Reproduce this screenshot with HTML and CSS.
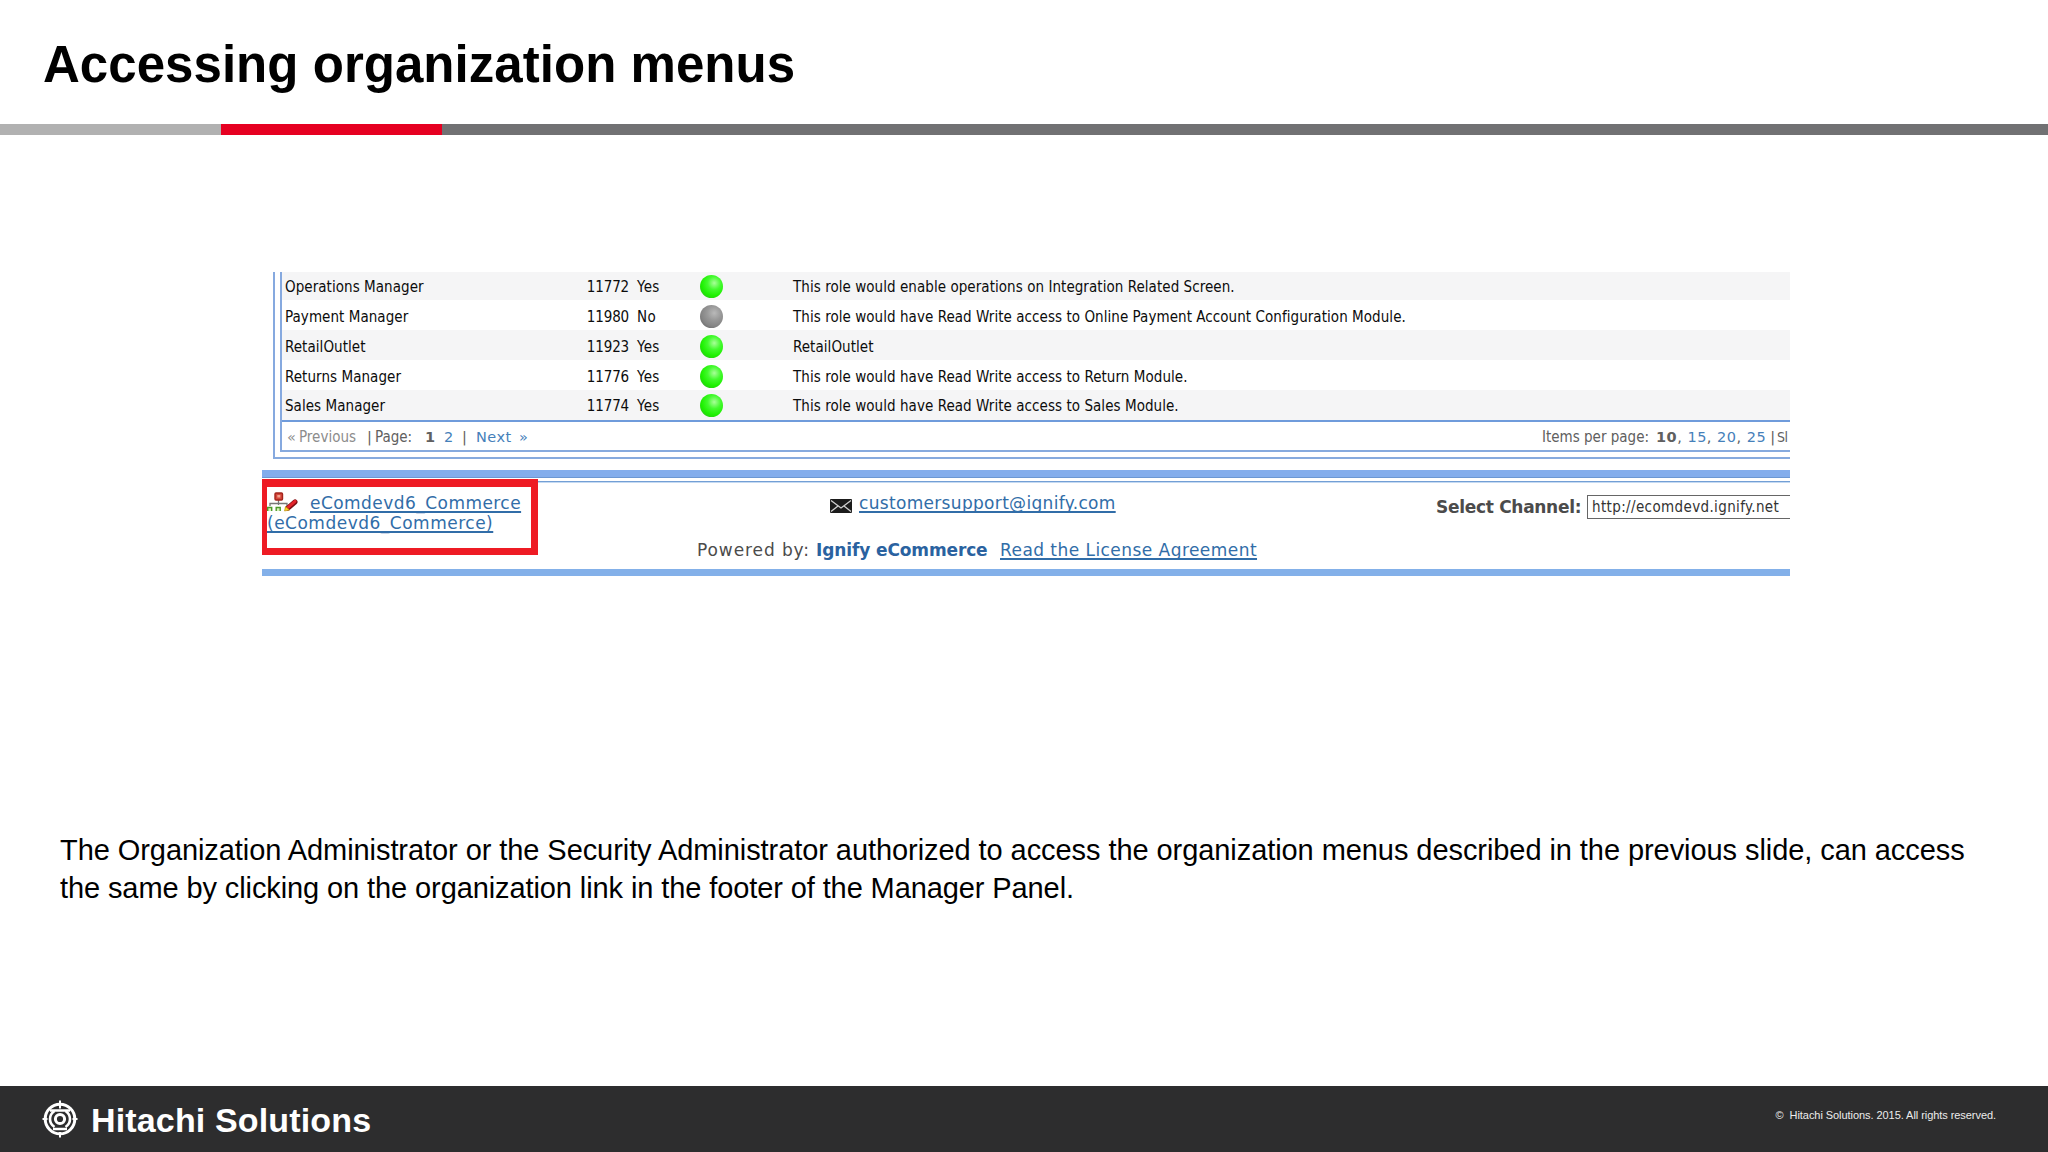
FILE: index.html
```html
<!DOCTYPE html>
<html lang="en">
<head>
<meta charset="utf-8">
<title>Accessing organization menus</title>
<link rel="stylesheet" href="styles.css">
</head>
<body>
<main class="slide">
  <header class="slide-header">
    <h1>Accessing organization menus</h1>
  </header>
  <div class="rule"><span class="rule-light"></span><span class="rule-red"></span><span class="rule-dark"></span></div>

  <section class="panel">
    <div class="grid-outer">
      <div class="grid-inner">
        <div class="row"><span>Operations Manager</span><span class="num">11772</span><span>Yes</span><i class="dot on"></i><span>This role would enable operations on Integration Related Screen.</span></div>
        <div class="row"><span>Payment Manager</span><span class="num">11980</span><span>No</span><i class="dot off"></i><span>This role would have Read Write access to Online Payment Account Configuration Module.</span></div>
        <div class="row"><span>RetailOutlet</span><span class="num">11923</span><span>Yes</span><i class="dot on"></i><span>RetailOutlet</span></div>
        <div class="row"><span>Returns Manager</span><span class="num">11776</span><span>Yes</span><i class="dot on"></i><span>This role would have Read Write access to Return Module.</span></div>
        <div class="row"><span>Sales Manager</span><span class="num">11774</span><span>Yes</span><i class="dot on"></i><span>This role would have Read Write access to Sales Module.</span></div>
        <div class="pager">
          <div class="pages">
            <span class="muted">«</span><span class="muted narrow">Previous</span><span>|</span><span class="narrow">Page:</span><b>1</b><a>2</a><span>|</span><a class="next">Next</a><a>»</a>
          </div>
          <div class="sizes"><span class="narrow">Items per page:</span><span class="list"><b>10</b>, <a>15</a>, <a>20</a>, <a>25</a></span><span>|</span><span class="narrow">Sl</span></div>
        </div>
      </div>
    </div>
    <div class="bar-top"></div>
    <div class="panel-footer">
      <div class="org">
        <svg class="org-icon" width="32" height="20" viewBox="0 0 32 20">
          <path d="M11.500 8v5M3 14v-2.500h17V14" fill="none" stroke="#777" stroke-width="1.300"/>
          <rect x="8" y="1" width="7.500" height="7" rx="1" fill="#d5473b" stroke="#a3241c" stroke-width="1.400"/>
          <rect x="10.300" y="3" width="3" height="2.500" fill="#f3a28f"/>
          <g fill="#d9f0b8" stroke="#4c9a2a" stroke-width="1.400"><path d="M.7 19v-3.500h4V19M9.200 19v-3.500h4V19"/></g>
          <path d="m21 16 7-6" stroke="#7d0d12" stroke-width="5" stroke-linecap="round"/>
          <path d="m21 15.300 7-6" stroke="#e3242b" stroke-width="3" stroke-linecap="round"/>
          <path d="m17.500 19 1-4.500 4 3.500z" fill="#f6d22b" stroke="#b98500" stroke-width=".6"/>
        </svg>
        <a class="link org-name">eComdevd6_Commerce</a><br><a class="link org-code">(eComdevd6_Commerce)</a>
      </div>
      <div class="contact">
        <div class="mail">
          <svg width="22" height="14" viewBox="0 0 22 14"><rect width="22" height="14" rx="1" fill="#1b1b1b"/><path d="m1 1.500 10 7.500 10-7.500M1 12.500 8 7M21 12.500 14 7" fill="none" stroke="#d0d0d0" stroke-width="1.300"/></svg>
          <a class="link">customersupport@ignify.com</a>
        </div>
        <div class="powered"><span class="by">Powered by:</span><b>Ignify eCommerce</b><a class="link">Read the License Agreement</a></div>
      </div>
      <div class="channel"><b>Select Channel:</b><span class="select">http://ecomdevd.ignify.net</span></div>
    </div>
    <div class="bar-bottom"></div>
    <div class="highlight"></div>
  </section>

  <p class="copy"><span>The Organization Administrator or the Security Administrator authorized to access the organization menus described in the previous slide, can access</span><br><span class="last">the same by clicking on the organization link in the footer of the Manager Panel.</span></p>

  <footer class="slide-footer">
    <div class="brand">
      <svg width="36" height="38" viewBox="0 0 36 38" fill="none" stroke="#fff">
        <circle cx="18" cy="19" r="14.800" stroke-width="3"/>
        <circle cx="18" cy="19" r="4.600" stroke-width="3"/>
        <path d="M18 .5v8M18 32v5.500M.5 19h5M30.500 19h5" stroke-width="2"/>
        <path d="M8 10.500h20M11 29h14" stroke-width="2.600"/>
        <path d="M12.500 11c-6 4-6 12 0 16M23.500 11c6 4 6 12 0 16" stroke-width="2.600"/>
      </svg>
      <span>Hitachi Solutions</span>
    </div>
    <small>©&nbsp; Hitachi Solutions. 2015. All rights reserved.</small>
  </footer>
</main>
</body>
</html>
```
FILE: styles.css
```css
* { box-sizing: border-box; }
body { margin: 0; background: #fff; font-family: "Liberation Sans", Arial, sans-serif; color: #000; }
.slide { width: 2048px; height: 1152px; display: flex; flex-direction: column; overflow: hidden; }

.slide-header { height: 124px; padding: 36px 0 0 43px; }
h1 { margin: 0; font-size: 51px; line-height: 58px; font-weight: bold; letter-spacing: .04px; white-space: nowrap; }
.rule { display: flex; height: 11px; }
.rule-light { width: 221px; background: #b1b1b1; }
.rule-red { width: 221px; background: #e60021; }
.rule-dark { flex: 1; background: #717173; }

/* Manager panel */
.panel { position: relative; width: 1528px; height: 304px; margin: 137px 0 0 262px; overflow: hidden; white-space: nowrap; font: 15px "DejaVu Sans Condensed", "DejaVu Sans", sans-serif; }
.grid-outer { margin-left: 11px; height: 187px; padding-left: 5px; border-left: 2px solid #86a9df; border-bottom: 2px solid #86aade; }
.grid-inner { height: 180px; border-left: 2px solid #86a9df; border-bottom: 2px solid #86aade; }
.row { display: grid; grid-template-columns: 266px 78px 59px 105px 1fr; align-items: center; height: 30px; padding: 4px 0 0 3px; line-height: 24px; letter-spacing: .055px; color: #0c0c0c; }
.row:first-child { height: 28px; padding-top: 2px; }
.row:nth-child(5) { padding-top: 2px; }
.row:nth-child(odd) { background: #f5f5f6; }
.num { text-align: right; letter-spacing: -.15px; }
.row span:nth-child(3) { padding-left: 8px; letter-spacing: .4px; }
.dot { width: 23px; height: 23px; margin: -2px 0 0 12px; border-radius: 50%; }
.on { background: radial-gradient(circle at 62% 35%, #a8ff98 0, #43fa2e 32%, #1df000 62%, #35a52c 100%); }
.off { background: radial-gradient(circle at 62% 35%, #b9b9b9 0, #989898 35%, #848484 65%, #555 100%); }

.pager { display: flex; justify-content: space-between; height: 30px; padding: 2px 0 0 5px; border-top: 2px solid #6f9bdb; font: 14.5px/26px "DejaVu Sans", sans-serif; color: #606060; }
.pager a { color: #4580ba; }
.narrow { font-family: "DejaVu Sans Condensed", "DejaVu Sans", sans-serif; font-size: 15px; }
.muted { color: #8c8c8c; }
.pages { display: grid; grid-template-columns: 12px 68px 8px 50px 19px 18px 14px 43px auto; }
.next { letter-spacing: .5px; }
.sizes { display: flex; width: 248px; }
.sizes .list { margin: 0 4px 0 7px; letter-spacing: .5px; }
.sizes .narrow:last-child { margin-left: 2px; font-size: 14px; letter-spacing: -.5px; }

.bar-top { height: 13px; margin-top: 11px; background: linear-gradient(#83adec 0 7px, #6b97d3 7px 8px, #fff 8px 11px, #739fd5 11px 12px, #c5daf2 12px); }
.panel-footer { display: flex; height: 86px; font: 17px/20px "DejaVu Sans", sans-serif; color: #4b4b4b; }
.link { color: #316da8; text-decoration: underline; text-decoration-thickness: 1.500px; text-decoration-skip-ink: none; text-underline-offset: 2px; letter-spacing: .45px; }
.org { flex: none; width: 435px; padding: 10px 0 0 5px; }
.org-icon { float: left; margin: -1px 11px 0 0; }
.org-code { letter-spacing: .5px; }
.contact { flex: none; width: 739px; padding-top: 10px; }
.mail { display: flex; margin-left: 133px; }
.mail svg { margin: 6px 7px 0 0; }
.mail .link { letter-spacing: .32px; }
.powered { display: flex; margin-top: 27px; }
.powered .by { width: 119px; letter-spacing: .9px; }
.powered b { width: 184px; color: #2a62a0; letter-spacing: -.12px; }
.channel { display: flex; flex: none; height: 24px; margin-top: 12px; line-height: 25px; }
.channel b { width: 151px; letter-spacing: -.3px; }
.select { flex: none; width: 240px; height: 24px; padding-left: 4px; border: 1.500px solid #666; font: 15px/23px "DejaVu Sans Condensed", "DejaVu Sans", sans-serif; letter-spacing: .37px; color: #333; }
.bar-bottom { height: 7px; background: #83b0e9; }
.highlight { position: absolute; left: 0; top: 207px; width: 276px; height: 76px; border: solid #ee1b24; border-width: 8px 7px 7px 5px; }

.copy { margin: 256px 0 0 60px; font-size: 29px; line-height: 37.500px; letter-spacing: -.07px; white-space: nowrap; }
.copy .last { letter-spacing: -.1px; }

.slide-footer { display: flex; justify-content: space-between; height: 66px; margin-top: auto; padding: 0 52px 0 42px; background: #2d2d2e; color: #fff; }
.brand { display: flex; gap: 13px; font: bold 34px/68px "Liberation Sans", Arial, sans-serif; letter-spacing: .15px; }
.brand svg { margin-top: 14px; }
small { font-size: 11px; line-height: 59px; letter-spacing: -.06px; color: #ececec; }
```
